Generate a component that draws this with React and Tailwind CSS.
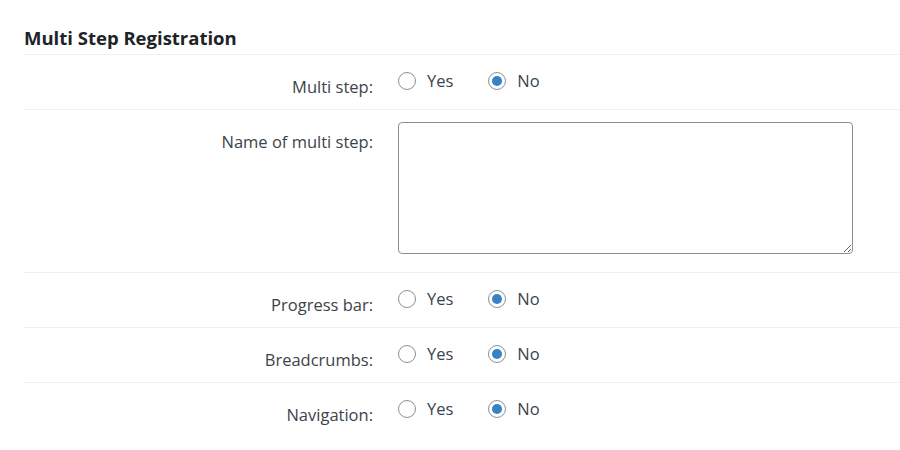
import { useState } from "react";

const Radio = ({ checked, label, onClick }) => (
  <label className="flex items-center cursor-pointer" onClick={onClick}>
    <span className="flex h-[18px] w-[18px] items-center justify-center rounded-full border border-[#8c8f94] bg-white">
      {checked && <span className="h-[10px] w-[10px] rounded-full bg-[#3582c4]" />}
    </span>
    <span className="ml-[11px] text-[16.5px] text-[#3c434a]">{label}</span>
  </label>
);

const YesNo = ({ value, set_value }) => (
  <div className="flex items-center gap-[35px]">
    <Radio checked={value === "yes"} label="Yes" onClick={() => set_value("yes")} />
    <Radio checked={value === "no"} label="No" onClick={() => set_value("no")} />
  </div>
);

const Row = ({ label, children, tall }) => (
  <div className={`flex border-t border-[#f0f0f1] ${tall ? "h-[163px]" : "h-[55px]"}`}>
    <div className="w-[349px] pt-[21px] text-right text-[16.5px] leading-[22px] text-[#3c434a]">
      {label}
    </div>
    <div className={`pl-[25px] ${tall ? "pt-[12px]" : "pt-[14px]"}`}>{children}</div>
  </div>
);

export default function App() {
  let [vals, set_vals] = useState({ multi: "no", progress: "no", crumbs: "no", nav: "no" });
  const set = (k) => (v) => set_vals({ ...vals, [k]: v });

  return (
    <div
      className="min-h-[450px] bg-white pl-[24px]"
      style={{ fontFamily: '"Open Sans", "Noto Sans", sans-serif' }}
    >
      <h2 className="pt-[26px] pb-[4px] text-[18.5px] font-bold leading-[24px] text-[#1d2327]">
        Multi Step Registration
      </h2>
      <Row label="Multi step:">
        <YesNo value={vals.multi} set_value={set("multi")} />
      </Row>
      <Row label="Name of multi step:" tall>
        <textarea className="block h-[132px] w-[455px] rounded-[4px] border border-[#8c8f94] bg-white px-2 py-1 text-[14px] text-[#2c3338] outline-none" />
      </Row>
      <Row label="Progress bar:">
        <YesNo value={vals.progress} set_value={set("progress")} />
      </Row>
      <Row label="Breadcrumbs:">
        <YesNo value={vals.crumbs} set_value={set("crumbs")} />
      </Row>
      <Row label="Navigation:">
        <YesNo value={vals.nav} set_value={set("nav")} />
      </Row>
    </div>
  );
}
